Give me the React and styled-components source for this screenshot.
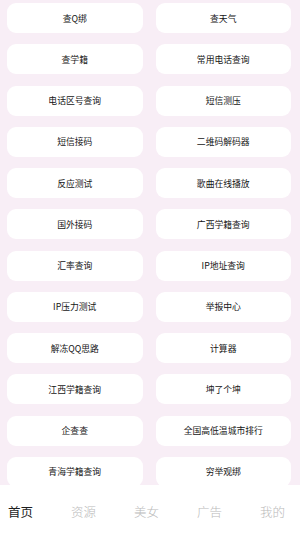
import React from "react";
import styled, { createGlobalStyle } from "styled-components";

const Global = createGlobalStyle`
  html, body { margin: 0; padding: 0; }
  body { font-family: "Noto Sans CJK SC", "Noto Sans", sans-serif; background: #f8eef6; }
  #root { width: 300px; height: 533px; }
`;

const Page = styled.div`
  width: 300px;
  height: 533px;
  display: flex;
  flex-direction: column;
  background: #f8eef6;
  overflow: hidden;
`;

const Content = styled.div`
  flex: 1;
  min-height: 0;
  overflow: hidden;
`;

const Grid = styled.div`
  display: grid;
  grid-template-columns: 1fr 1fr;
  column-gap: 13px;
  row-gap: 11.25px;
  padding: 3px 9px 0 7px;
`;

const Card = styled.div`
  height: 30px;
  background: #ffffff;
  border-radius: 9px;
  display: flex;
  align-items: center;
  justify-content: center;
  font-size: 8.8px;
  font-weight: 400;
  color: #151515;
  white-space: nowrap;
`;

const Nav = styled.nav`
  height: 48px;
  flex: none;
  background: #ffffff;
  display: flex;
  align-items: center;
  justify-content: space-between;
  padding: 6px 15px 0 8px;
  box-sizing: border-box;
`;

const Tab = styled.div`
  font-size: 12.5px;
  line-height: 18px;
  color: ${(p) => (p.$active ? "#1e1e1e" : "#bababa")};
  font-weight: ${(p) => (p.$active ? 400 : 300)};
`;

const items = [
  "查Q绑", "查天气",
  "查学籍", "常用电话查询",
  "电话区号查询", "短信测压",
  "短信接码", "二维码解码器",
  "反应测试", "歌曲在线播放",
  "国外接码", "广西学籍查询",
  "汇率查询", "IP地址查询",
  "IP压力测试", "举报中心",
  "解冻QQ思路", "计算器",
  "江西学籍查询", "坤了个坤",
  "企查查", "全国高低温城市排行",
  "青海学籍查询", "穷举观绑",
  "手机号估价", "随机头像",
];

const tabs = ["首页", "资源", "美女", "广告", "我的"];

export default function App() {
  return (
    <>
      <Global />
      <Page>
        <Content>
          <Grid>
            {items.map((t, i) => (
              <Card key={i}>{t}</Card>
            ))}
          </Grid>
        </Content>
        <Nav>
          {tabs.map((t, i) => (
            <Tab key={t} $active={i === 0}>{t}</Tab>
          ))}
        </Nav>
      </Page>
    </>
  );
}
